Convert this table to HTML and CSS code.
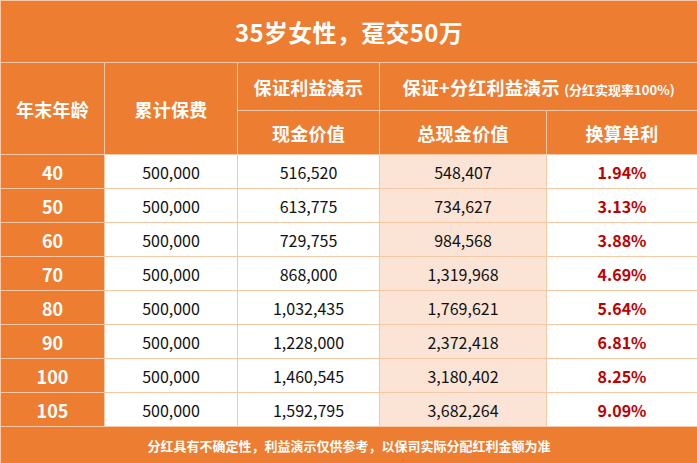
FILE: index.html
```html
<!DOCTYPE html>
<html lang="zh-CN">
<head>
<meta charset="utf-8">
<title>35岁女性，趸交50万</title>
<link rel="stylesheet" href="styles.css">
</head>
<body>
<table class="sheet">
  <colgroup>
    <col class="c1"><col class="c2"><col class="c3"><col class="c4"><col class="c5">
  </colgroup>
  <thead>
    <tr class="title-row"><th colspan="5" class="title">35岁女性，趸交50万</th></tr>
    <tr class="head1">
      <th rowspan="2">年末年龄</th>
      <th rowspan="2">累计保费</th>
      <th>保证利益演示</th>
      <th colspan="2">保证+分红利益演示 <span class="note">(分红实现率100%)</span></th>
    </tr>
    <tr class="head2">
      <th>现金价值</th>
      <th>总现金价值</th>
      <th>换算单利</th>
    </tr>
  </thead>
  <tbody>
    <tr><th class="age">40</th><td>500,000</td><td>516,520</td><td class="hl">548,407</td><td class="rate">1.94%</td></tr>
    <tr><th class="age">50</th><td>500,000</td><td>613,775</td><td class="hl">734,627</td><td class="rate">3.13%</td></tr>
    <tr><th class="age">60</th><td>500,000</td><td>729,755</td><td class="hl">984,568</td><td class="rate">3.88%</td></tr>
    <tr><th class="age">70</th><td>500,000</td><td>868,000</td><td class="hl">1,319,968</td><td class="rate">4.69%</td></tr>
    <tr><th class="age">80</th><td>500,000</td><td>1,032,435</td><td class="hl">1,769,621</td><td class="rate">5.64%</td></tr>
    <tr><th class="age">90</th><td>500,000</td><td>1,228,000</td><td class="hl">2,372,418</td><td class="rate">6.81%</td></tr>
    <tr><th class="age">100</th><td>500,000</td><td>1,460,545</td><td class="hl">3,180,402</td><td class="rate">8.25%</td></tr>
    <tr><th class="age">105</th><td>500,000</td><td>1,592,795</td><td class="hl">3,682,264</td><td class="rate">9.09%</td></tr>
  </tbody>
  <tfoot>
    <tr class="foot-row"><td colspan="5" class="foot">分红具有不确定性，利益演示仅供参考，以保司实际分配红利金额为准</td></tr>
  </tfoot>
</table>
</body>
</html>
```

FILE: styles.css
```css
html, body {
  margin: 0;
  padding: 0;
  background: #ffffff;
}

.sheet {
  width: 697px;
  border-collapse: collapse;
  table-layout: fixed;
  font-family: "Noto Sans CJK SC", "Noto Sans", sans-serif;
  color: #111111;
}

.c1 { width: 104px; }
.c2 { width: 133px; }
.c3 { width: 142px; }
.c4 { width: 167px; }
.c5 { width: 151px; }

.sheet th,
.sheet td {
  border: 1px solid #f6c8a6;
  padding: 0;
  text-align: center;
  vertical-align: middle;
  line-height: 1;
}

.sheet thead th,
.sheet .age,
.sheet .foot {
  background: #ed7d31;
  color: #ffffff;
  font-weight: 700;
}

.title-row { height: 62px; }
.title {
  font-size: 24px;
  letter-spacing: 0.3px;
}

.head1 { height: 48px; }
.head2 { height: 44px; }
.head1 th,
.head2 th {
  font-size: 18px;
  letter-spacing: 0.3px;
}

.note {
  font-size: 13px;
  font-weight: 700;
  letter-spacing: 0;
}

.sheet tbody tr { height: 34px; }

.sheet tbody td {
  font-size: 16px;
  font-weight: 400;
}

.sheet .age {
  font-size: 18px;
}

.sheet .hl {
  background: #fbe4d5;
}

.sheet .rate {
  color: #c00000;
  font-weight: 700;
}

.foot-row { height: 37px; }
.foot {
  font-size: 13px;
}
```
